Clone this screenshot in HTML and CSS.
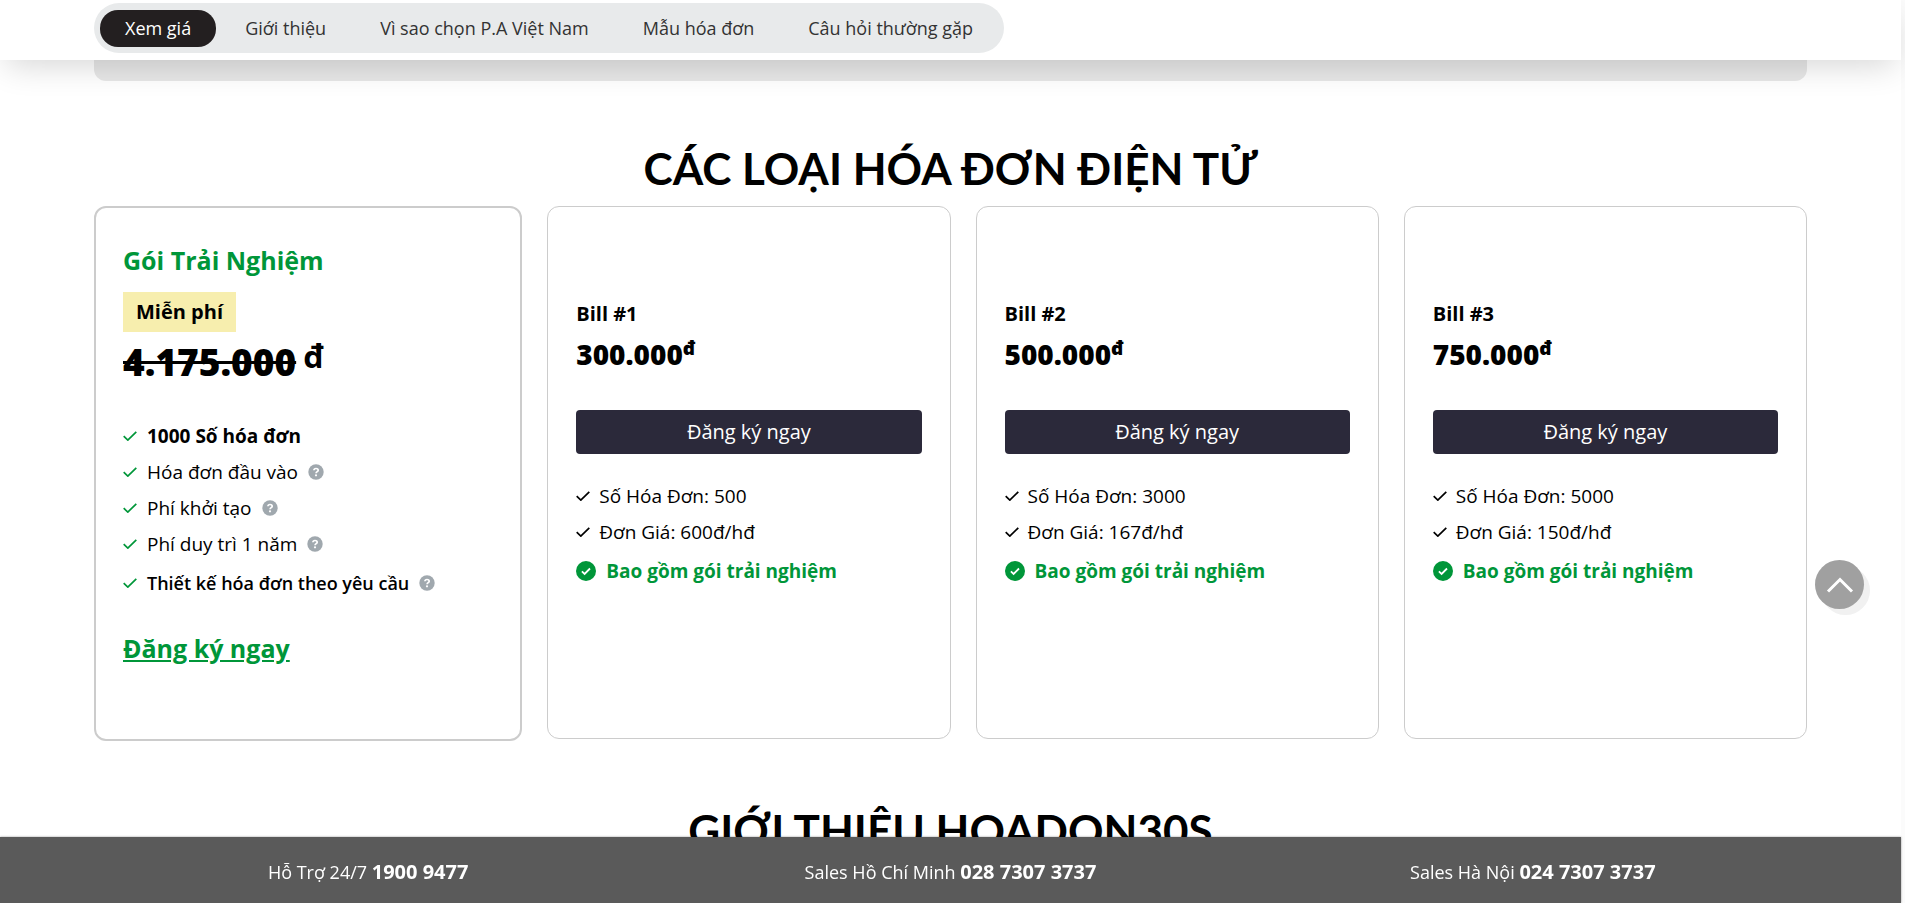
FILE: index.html
```html
<!DOCTYPE html>
<html lang="vi">
<head>
<meta charset="UTF-8">
<meta name="viewport" content="width=device-width, initial-scale=1.0">
<title>Hóa đơn điện tử</title>
<link rel="stylesheet" href="styles.css">
</head>
<body>
<svg class="sprite" width="0" height="0" aria-hidden="true">
    <symbol id="check" viewBox="0 0 14 10"><path d="M.7 5.2 4.8 9.1 13.3.8" fill="none" stroke="currentColor" stroke-width="1.7"/></symbol>
    <symbol id="check-circle" viewBox="0 0 20 20"><circle cx="10" cy="10" r="10" fill="currentColor"/><path d="M5.9 10.3 8.6 12.9 14 7.5" fill="none" stroke="#fff" stroke-width="1.8"/></symbol>
    <symbol id="help" viewBox="0 0 16 16"><circle cx="8" cy="8" r="7.7" fill="#a0a8ae"/><path d="M5.9 6.3C6 5 6.9 4.5 8 4.5c1.300 0 2.200.7 2.200 1.700 0 1.500-2.100 1.400-2.100 3" fill="none" stroke="#fff" stroke-width="1.7"/><circle cx="8" cy="11.300" r="1.100" fill="#fff"/></symbol>
</svg>

<header class="topbar">
    <nav class="menu">
        <a class="active" href="#gia">Xem giá</a>
        <a href="#gioi-thieu">Giới thiệu</a>
        <a href="#vi-sao">Vì sao chọn P.A Việt Nam</a>
        <a href="#mau">Mẫu hóa đơn</a>
        <a href="#hoi-dap">Câu hỏi thường gặp</a>
    </nav>
</header>

<main class="container">
    <div class="panel-end"></div>

    <section id="gia">
        <h2 class="title">CÁC LOẠI HÓA ĐƠN ĐIỆN TỬ</h2>
        <div class="plans">
            <div class="card trial">
                <h3 class="trial-name">Gói Trải Nghiệm</h3>
                <span class="badge">Miễn phí</span>
                <div class="trial-price"><del>4.175.000</del> <span class="unit">đ</span></div>
                <ul class="list green">
                    <li><svg class="check"><use href="#check"/></svg><b>1000 Số hóa đơn</b></li>
                    <li><svg class="check"><use href="#check"/></svg>Hóa đơn đầu vào<svg class="help"><use href="#help"/></svg></li>
                    <li><svg class="check"><use href="#check"/></svg>Phí khởi tạo<svg class="help"><use href="#help"/></svg></li>
                    <li><svg class="check"><use href="#check"/></svg>Phí duy trì 1 năm<svg class="help"><use href="#help"/></svg></li>
                    <li class="last design"><svg class="check"><use href="#check"/></svg><b>Thiết kế hóa đơn theo yêu cầu</b><svg class="help"><use href="#help"/></svg></li>
                </ul>
                <a class="trial-link" href="#dang-ky">Đăng ký ngay</a>
            </div>

            <div class="card bill">
                <h3 class="name">Bill #1</h3>
                <div class="price">300.000<sup>đ</sup></div>
                <button class="btn" type="button">Đăng ký ngay</button>
                <ul class="list">
                    <li><svg class="check"><use href="#check"/></svg>Số Hóa Đơn: 500</li>
                    <li><svg class="check"><use href="#check"/></svg>Đơn Giá: 600đ/hđ</li>
                    <li class="last include"><svg class="circle"><use href="#check-circle"/></svg>Bao gồm gói trải nghiệm</li>
                </ul>
            </div>

            <div class="card bill">
                <h3 class="name">Bill #2</h3>
                <div class="price">500.000<sup>đ</sup></div>
                <button class="btn" type="button">Đăng ký ngay</button>
                <ul class="list">
                    <li><svg class="check"><use href="#check"/></svg>Số Hóa Đơn: 3000</li>
                    <li><svg class="check"><use href="#check"/></svg>Đơn Giá: 167đ/hđ</li>
                    <li class="last include"><svg class="circle"><use href="#check-circle"/></svg>Bao gồm gói trải nghiệm</li>
                </ul>
            </div>

            <div class="card bill">
                <h3 class="name">Bill #3</h3>
                <div class="price">750.000<sup>đ</sup></div>
                <button class="btn" type="button">Đăng ký ngay</button>
                <ul class="list">
                    <li><svg class="check"><use href="#check"/></svg>Số Hóa Đơn: 5000</li>
                    <li><svg class="check"><use href="#check"/></svg>Đơn Giá: 150đ/hđ</li>
                    <li class="last include"><svg class="circle"><use href="#check-circle"/></svg>Bao gồm gói trải nghiệm</li>
                </ul>
            </div>
        </div>
    </section>

    <section id="gioi-thieu">
        <h2 class="title">GIỚI THIỆU HOADON30S</h2>
    </section>
</main>

<button class="to-top" type="button" aria-label="Lên đầu trang">
    <svg width="28" height="18" viewBox="0 0 28 18"><path d="M2 15.500 14 3.500 26 15.500" fill="none" stroke="#fff" stroke-width="3"/></svg>
</button>

<footer class="hotline">
    <div>Hỗ Trợ 24/7 <b>1900 9477</b></div>
    <div>Sales Hồ Chí Minh <b>028 7307 3737</b></div>
    <div>Sales Hà Nội <b>024 7307 3737</b></div>
</footer>
</body>
</html>
```

FILE: styles.css
```css
* {
    box-sizing: border-box;
}
html {
    height: 100%;
    overflow: hidden;
    background: #fff;
}
body {
    min-height: 100%;
    margin: 0;
    border-right: 4px solid #fbfbfb;
    font-family: "Open Sans", "Noto Sans", sans-serif;
    font-size: 19px;
    color: #000;
}
h2, h3, ul {
    margin: 0;
    padding: 0;
}
.sprite {
    position: absolute;
}

/* top menu */
.topbar {
    position: fixed;
    top: 0;
    left: 0;
    right: 4px;
    z-index: 10;
    height: 60px;
    padding: 3px 94px;
    background: #fff;
    box-shadow: 0 12px 32px -6px rgba(0,0,0,.16);
}
.menu {
    display: inline-flex;
    align-items: center;
    gap: 4px;
    height: 50px;
    padding: 0 6px;
    border-radius: 25px;
    background: #e8eaeb;
}
.menu a {
    padding: 0 25px;
    border-radius: 18px;
    font-size: 18px;
    line-height: 37px;
    color: #333;
    text-decoration: none;
}
.menu .active {
    background: #231f20;
    color: #fff;
    font-weight: 500;
}

.container {
    padding: 0 94px;
}
.panel-end {
    height: 81px;
    border-radius: 0 0 12px 12px;
    background: #e8e8e8;
}
.title {
    padding-top: 59px;
    font-family: Lato, "Open Sans", sans-serif;
    font-size: 44px;
    font-weight: 700;
    line-height: 56px;
    text-align: center;
}

/* price cards */
.plans {
    display: grid;
    grid-template-columns: 25% 1fr 1fr 1fr;
    align-items: start;
    gap: 25px;
    padding-top: 10px;
    margin-bottom: 2px;
}
.card {
    min-height: 533px;
    padding: 0 28px;
    border: 1px solid #ccc;
    border-radius: 12px;
}
.trial {
    min-height: 535px;
    padding: 34px 27px 0;
    border: 2px solid #ccc;
}
.trial-name {
    font-size: 25px;
    line-height: 36px;
    color: #009639;
}
.badge {
    display: inline-block;
    margin-top: 14px;
    padding: 0 13px;
    background: #f7eeae;
    font-size: 20px;
    font-weight: 700;
    line-height: 40px;
}
.trial-price {
    display: flex;
    gap: 7px;
    font-size: 37px;
    font-weight: 800;
    line-height: 60px;
}
.trial-price .unit {
    font-size: 32px;
    font-weight: 700;
    line-height: 48px;
}
.list {
    list-style: none;
}
.list li {
    display: flex;
    align-items: center;
    height: 36px;
}
.list b {
    font-weight: 700;
}
.list .last {
    margin-top: 3px;
}
.list .design b {
    font-size: 18px;
    font-weight: 600;
}
.list .check {
    width: 14px;
    height: 10px;
    margin-right: 9px;
}
.list .help {
    width: 16px;
    height: 16px;
    margin-left: 10px;
}
.list .circle {
    width: 20px;
    height: 20px;
    margin-right: 10px;
}
.list .include {
    color: #009639;
    font-weight: 700;
}
.green {
    margin-top: 26px;
}
.green .check {
    margin-right: 10px;
    color: #009639;
}
.trial-link {
    display: inline-block;
    margin-top: 29px;
    font-size: 25px;
    font-weight: 700;
    line-height: 36px;
    color: #009639;
}
.bill {
    padding-top: 92px;
}
.name {
    font-size: 20px;
    font-weight: 700;
    line-height: 30px;
}
.price {
    height: 81px;
    font-size: 28px;
    font-weight: 800;
    line-height: 50px;
}
.price sup {
    font-size: 19px;
    line-height: 0;
}
.btn {
    display: block;
    width: 100%;
    height: 44px;
    padding: 0 0 2px;
    margin-bottom: 24px;
    border: 0;
    border-radius: 4px;
    background: #2b293a;
    color: #fff;
    font: 500 20px "Open Sans", sans-serif;
}

.to-top {
    position: fixed;
    right: 41px;
    bottom: 294px;
    display: flex;
    align-items: center;
    justify-content: center;
    width: 49px;
    height: 49px;
    padding: 0;
    border: 0;
    border-radius: 50%;
    background: #a0a0a0;
    box-shadow: 6px 6px 0 #f1f1f1;
}

/* bottom bar */
.hotline {
    position: fixed;
    left: 0;
    right: 4px;
    bottom: 0;
    display: grid;
    grid-template-columns: 1fr 1fr 1fr;
    height: 66px;
    padding: 0 77px;
    background: #5a5a5a;
    box-shadow: 0 0 2px rgba(0,0,0,.4);
    color: #fff;
    font-size: 18px;
    line-height: 70px;
    text-align: center;
}
.hotline b {
    font-size: 20px;
}
```
